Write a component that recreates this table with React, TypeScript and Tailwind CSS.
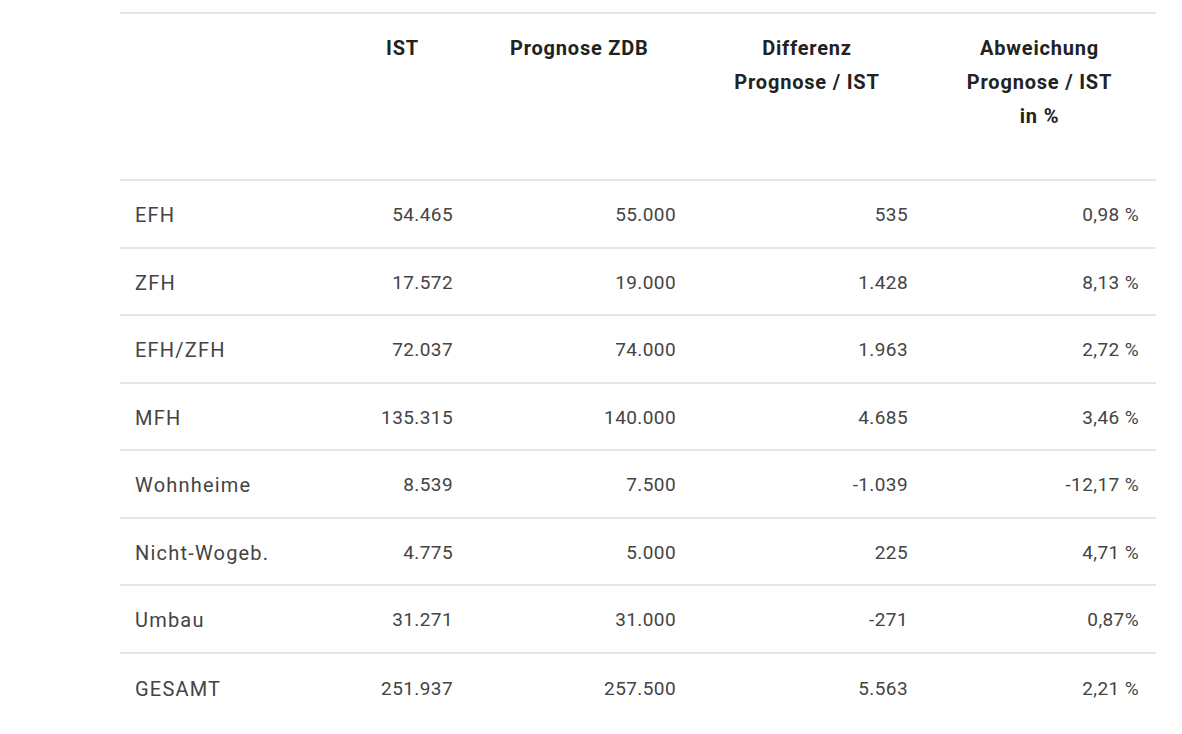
import React from "react";

const rows: [string, string, string, string, string][] = [
  ["EFH", "54.465", "55.000", "535", "0,98 %"],
  ["ZFH", "17.572", "19.000", "1.428", "8,13 %"],
  ["EFH/ZFH", "72.037", "74.000", "1.963", "2,72 %"],
  ["MFH", "135.315", "140.000", "4.685", "3,46 %"],
  ["Wohnheime", "8.539", "7.500", "-1.039", "-12,17 %"],
  ["Nicht-Wogeb.", "4.775", "5.000", "225", "4,71 %"],
  ["Umbau", "31.271", "31.000", "-271", "0,87%"],
  ["GESAMT", "251.937", "257.500", "5.563", "2,21 %"],
];

export default function App() {
  return (
    <div
      className="w-[1182px] h-[734px] bg-white overflow-hidden"
      style={{ fontFamily: "Roboto, 'Liberation Sans', sans-serif" }}
    >
      <div className="ml-[120px] mt-[12px] w-[1036px] border-t-2 border-[#e6e6e6]">
        <div className="grid grid-cols-[251px_124px_196px_232px_233px] h-[167px] border-b-2 border-[#e6e6e6] text-[20px] font-bold text-[#222] leading-[34px] tracking-[0.8px] pt-[17px]">
          <div />
          <div className="pl-[15px]">IST</div>
          <div className="pl-[15px]">Prognose ZDB</div>
          <div className="text-center">
            Differenz
            <br />
            Prognose / IST
          </div>
          <div className="text-center">
            Abweichung
            <br />
            Prognose / IST
            <br />
            in %
          </div>
        </div>
        {rows.map((r, i) => (
          <div
            key={r[0]}
            className={
              "grid grid-cols-[251px_124px_196px_232px_233px] h-[67.5px] items-center pt-[3px] text-[19px] text-[#444] tracking-[0.4px] " +
              (i < rows.length - 1 ? "border-b-2 border-[#e6e6e6]" : "")
            }
          >
            <div className="pl-[15px] text-[20px] tracking-[1.2px]">{r[0]}</div>
            <div className="text-right pr-[42px]">{r[1]}</div>
            <div className="text-right pr-[15px]">{r[2]}</div>
            <div className="text-right pr-[15px]">{r[3]}</div>
            <div className="text-right pr-[17px]">{r[4]}</div>
          </div>
        ))}
      </div>
    </div>
  );
}
